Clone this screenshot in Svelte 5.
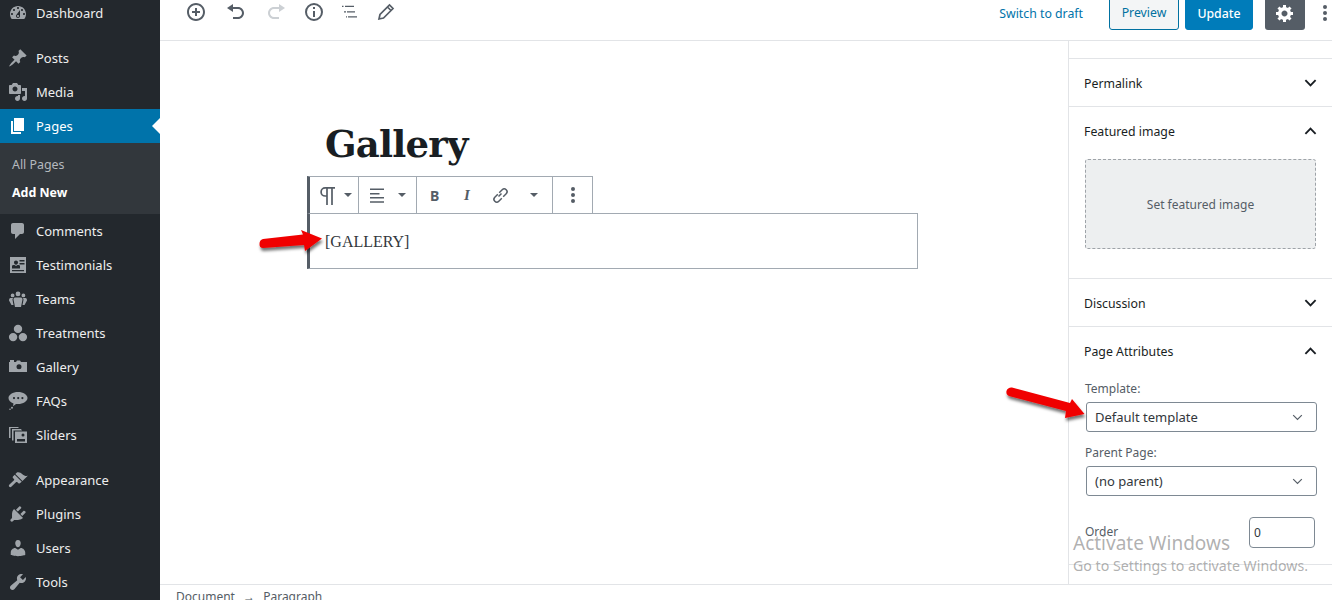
<script>
	const ui = {
		dashboard: "M3.76 16h12.48c1.1-1.37 1.76-3.11 1.76-5 0-4.42-3.58-8-8-8s-8 3.58-8 8c0 1.89.66 3.63 1.76 5zM10 4c.55 0 1 .45 1 1s-.45 1-1 1-1-.45-1-1 .45-1 1-1zM6 6c.55 0 1 .45 1 1s-.45 1-1 1-1-.45-1-1 .45-1 1-1zm8 0c.55 0 1 .45 1 1s-.45 1-1 1-1-.45-1-1 .45-1 1-1zm-5.37 5.55L12 7v6c0 1.1-.9 2-2 2s-2-.9-2-2c0-.57.24-1.08.63-1.45zM4 10c.55 0 1 .45 1 1s-.45 1-1 1-1-.45-1-1 .45-1 1-1zm12 0c.55 0 1 .45 1 1s-.45 1-1 1-1-.45-1-1 .45-1 1-1zm-5 3c0-.55-.45-1-1-1s-1 .45-1 1 .45 1 1 1 1-.45 1-1z",
		posts: "M10.44 3.02l1.82-1.82 6.36 6.35-1.83 1.82c-1.05-.68-2.48-.57-3.41.36l-.75.75c-.92.93-1.04 2.35-.35 3.41l-1.83 1.82-2.41-2.41-2.8 2.79c-.42.42-3.38 2.71-3.8 2.29s1.86-3.39 2.28-3.81l2.79-2.79L4.1 9.36l1.83-1.82c1.05.69 2.48.57 3.4-.36l.75-.75c.93-.92 1.05-2.35.36-3.41z",
		media: "M13 11V4c0-.55-.45-1-1-1h-1.67L9 1H5L3.67 3H2c-.55 0-1 .45-1 1v7c0 .55.45 1 1 1h10c.55 0 1-.45 1-1zM7 4.5c1.38 0 2.5 1.12 2.5 2.5S8.38 9.5 7 9.5 4.5 8.38 4.5 7 5.62 4.5 7 4.5zM14 6h5v10.5c0 1.38-1.12 2.5-2.5 2.5S14 17.88 14 16.5s1.12-2.5 2.5-2.5c.17 0 .34.02.5.05V9h-3V6zm-4 8.05V13h2v3.5c0 1.38-1.12 2.5-2.5 2.5S7 17.88 7 16.5 8.12 14 9.5 14c.17 0 .34.02.5.05z",
		pages: "M6 15V2h10v13H6zm-1 1h8v2H3V5h2v11z",
		comments: "M5 2h9c1.1 0 2 .9 2 2v7c0 1.1-.9 2-2 2h-2l-5 5v-5H5c-1.1 0-2-.9-2-2V4c0-1.1.9-2 2-2z",
		testimonials: "M2 2h16v16H2zM8 5.5c-1.2 0-2 .9-2 2s.8 2.3 2 2.3 2-1.2 2-2.300-.8-2-2-2zM11.500 5v1.500h5V5zM11.500 8v1.500h5V8zM4 11v2.500h8V11c0-.6-1-.8-2.500-.9L8 11l-1.500-.9C5 10.200 4 10.400 4 11zM4 15v1.300h12V15z",
		teams: "M10 2.500a2.400 2.400 0 1 0 0 4.800 2.400 2.400 0 0 0 0-4.800zM4.600 4.500a1.900 1.900 0 1 0 0 3.800 1.900 1.900 0 0 0 0-3.800zM15.400 4.500a1.900 1.900 0 1 0 0 3.800 1.900 1.900 0 0 0 0-3.800zM7 8.500h6c1 0 1.500 1 1.500 2L13 18H7l-1.500-7.500c0-1 .5-2 1.500-2zM2.500 9h2.700c-.5.5-.7 1-.7 1.800l1 5.200H3.500L1 11.500c0-1.200.5-2.500 1.500-2.500zM17.500 9h-2.700c.5.5.7 1 .7 1.800l-1 5.200h2L19 11.500c0-1.200-.5-2.500-1.500-2.500z",
		treatments: "M10 1.700a4.200 4.200 0 1 0 0 8.400 4.200 4.200 0 0 0 0-8.400zM5.100 9.900a4.200 4.200 0 1 0 0 8.400 4.200 4.200 0 0 0 0-8.400zM14.900 9.900a4.200 4.200 0 1 0 0 8.400 4.200 4.200 0 0 0 0-8.400z",
		gallery: "M1 5h1V3h4v2h2l1-1.500h3L13 5h6v10H1zM11 7.200a2.500 2.500 0 1 0 0 5 2.500 2.500 0 0 0 0-5z",
		faqs: "M10 1c5.200 0 9.500 2.700 9.500 6s-4.300 6-9.500 6c-.7 0-1.400 0-2-.1L5 15.300l.5-2.800C2.500 11.500.5 9.500.5 7c0-3.300 4.300-6 9.500-6zM6 6a1.100 1.100 0 1 0 0 2.200A1.100 1.100 0 0 0 6 6zm4.200 0a1.100 1.100 0 1 0 0 2.200 1.100 1.100 0 0 0 0-2.200zm4.200 0a1.100 1.100 0 1 0 0 2.200 1.100 1.100 0 0 0 0-2.200zM4 15.700a1 1 0 1 1 0 2 1 1 0 0 1 0-2zM2 17.500a.8.8 0 1 1 0 1.600.8.8 0 0 1 0-1.600z",
		sliders: "M7 6.500h12V18H7zM15 8.500a1.500 1.500 0 1 0 0 3 1.500 1.500 0 0 0 0-3zM9 14v2.500h8V14zM4 4h9l1 1.500H5.500v10H4zM1 2h9l1 1H2.500v10H1z",
		appearance: "M14.48 11.06L7.41 3.99l1.5-1.5c.5-.56 2.3-.47 3.51.32 1.21.8 1.43 1.28 2.91 2.1 1.18.64 2.45 1.26 4.45.85zM13.770 11.770L6.700 4.700 4.930 6.470c-.39.39-.39 1.020 0 1.410l1.060 1.060c.39.39.39 1.030 0 1.420L1.500 14.500c-.8.8-.8 1.700-.2 2.300s1.500.6 2.300-.2l4.350-4.350c.39-.39 1.030-.39 1.420 0l1.060 1.060c.39.39 1.020.39 1.410 0z",
		plugins: "M13.11 4.36L9.87 7.6 8 5.73l3.24-3.24c.35-.34 1.05-.2 1.56.32.52.51.66 1.21.31 1.55zm-8 1.77l.91-1.12 9.01 9.01-1.19.84c-.71.71-2.63 1.16-3.82 1.16H6.14L4.9 17.26c-.59.59-1.54.59-2.12 0-.59-.58-.59-1.53 0-2.12l1.24-1.24v-3.88c0-1.13.4-3.19 1.09-3.89zm7.26 3.97l3.24-3.24c.34-.35 1.04-.21 1.55.31.52.51.66 1.21.31 1.55l-3.24 3.25z",
		users: "M10 9.25c-2.27 0-2.73-3.44-2.73-3.44C7 4.02 7.82 2 9.97 2c2.16 0 2.98 2.02 2.71 3.81 0 0-.41 3.44-2.68 3.44zm0 2.57L12.72 10c2.39 0 4.52 2.33 4.52 4.53v2.49s-3.65 1.13-7.24 1.13c-3.65 0-7.24-1.13-7.24-1.13v-2.49c0-2.25 1.94-4.48 4.47-4.48z",
		tools: "M16.68 9.77c-1.34 1.34-3.3 1.67-4.95.99l-5.41 6.52c-.99.99-2.59.99-3.58 0s-.99-2.59 0-3.57l6.52-5.42c-.68-1.65-.35-3.61.99-4.95 1.28-1.28 3.12-1.62 4.72-1.06l-2.89 2.89 2.82 2.82 2.86-2.87c.53 1.58.18 3.39-1.08 4.65z"
	};

	const groupA = [["Dashboard", "dashboard"]];
	const groupB = [["Posts", "posts"], ["Media", "media"]];
	const groupC = [
		["Comments", "comments"],
		["Testimonials", "testimonials"],
		["Teams", "teams"],
		["Treatments", "treatments"],
		["Gallery", "gallery"],
		["FAQs", "faqs"],
		["Sliders", "sliders"]
	];
	const groupD = [
		["Appearance", "appearance"],
		["Plugins", "plugins"],
		["Users", "users"],
		["Tools", "tools"]
	];
</script>

{#snippet item(row)}
	<a class="item" href="#top">
		<svg class="mi" viewBox="0 0 20 20"><path d={ui[row[1]]} /></svg>
		<span>{row[0]}</span>
	</a>
{/snippet}

{#snippet chev(up)}
	<svg class="chev" viewBox="0 0 14 8"><path d={up ? "M1.5 7L7 1.5 12.5 7" : "M1.5 1L7 6.5 12.5 1"} /></svg>
{/snippet}

{#snippet caret()}
	<i class="caret"></i>
{/snippet}

<div class="shell">
	<nav class="nav">
		{#each groupA as row}{@render item(row)}{/each}
		<div class="sep"></div>
		{#each groupB as row}{@render item(row)}{/each}
		<a class="item active" href="#top">
			<svg class="mi" viewBox="0 0 20 20"><path d={ui.pages} /></svg>
			<span>Pages</span>
		</a>
		<div class="sub">
			<a href="#top">All Pages</a>
			<a href="#top" class="on">Add New</a>
		</div>
		{#each groupC as row}{@render item(row)}{/each}
		<div class="sep"></div>
		{#each groupD as row}{@render item(row)}{/each}
	</nav>

	<div class="main">
		<header class="top">
			<div class="tools">
				<button class="tw" aria-label="Add block">
					<svg viewBox="0 0 20 20" class="ti"><path d="M10 1c-5 0-9 4-9 9s4 9 9 9 9-4 9-9-4-9-9-9zm0 16c-3.9 0-7-3.1-7-7s3.1-7 7-7 7 3.1 7 7-3.1 7-7 7zm1-11H9v3H6v2h3v3h2v-3h3V9h-3V6z" /></svg>
				</button>
				<button class="tw" aria-label="Undo">
					<svg viewBox="0 0 20 20" class="ti"><path d="M12 5H7V2L1 6l6 4V7h5c2.2 0 4 1.8 4 4s-1.8 4-4 4H7v2h5c3.3 0 6-2.7 6-6s-2.7-6-6-6z" /></svg>
				</button>
				<button class="tw off" aria-label="Redo">
					<svg viewBox="0 0 20 20" class="ti"><path d="M8 5h5V2l6 4-6 4V7H8c-2.2 0-4 1.8-4 4s1.8 4 4 4h5v2H8c-3.3 0-6-2.7-6-6s2.7-6 6-6z" /></svg>
				</button>
				<button class="tn" aria-label="Details">
					<svg viewBox="0 0 20 20" class="ti"><path d="M10 1a9 9 0 1 0 0 18 9 9 0 0 0 0-18zm0 16a7 7 0 1 1 0-14 7 7 0 0 1 0 14zM9 9h2v6H9zm0-4h2v2H9z" /></svg>
				</button>
				<button class="tn" aria-label="Outline">
					<svg viewBox="0 0 20 20" class="ti"><path d="M2 3.800h1.500v1.300H2zM5 3.800h9v1.300H5zM4 9.300h2v1.300H4zM7 9.300h8v1.300H7zM6 14.200h1v1.300H6zM8 14.200h9v1.300H8z" /></svg>
				</button>
				<button class="tn" aria-label="Tools">
					<svg viewBox="0 0 20 20" class="pencil"><path d="M3 17l1-4.500L13.500 3 17 6.500 7.500 16zM11.500 5l3.500 3.500" /></svg>
				</button>
			</div>
			<div class="actions">
				<a class="draft" href="#top">Switch to draft</a>
				<button class="preview">Preview</button>
				<button class="update">Update</button>
				<button class="gear" aria-label="Settings">
					<svg viewBox="0 0 20 20" width="20" height="20"><path fill="#fff" d="M18 12h-2.180c-.17.7-.44 1.350-.81 1.930l1.540 1.540-2.100 2.100-1.540-1.540c-.58.360-1.230.640-1.910.810V19H8v-2.180c-.680-.170-1.330-.450-1.910-.810l-1.540 1.540-2.120-2.120 1.540-1.540c-.360-.580-.640-1.230-.810-1.910H1V9h2.180c.170-.680.450-1.330.810-1.910L2.450 5.550l2.100-2.100 1.540 1.540c.580-.370 1.230-.640 1.910-.810V2h3v2.180c.680.170 1.330.440 1.910.810l1.540-1.540 2.120 2.120-1.540 1.540c.360.580.640 1.230.810 1.890H18v3zm-8.500 1.500c1.660 0 3-1.340 3-3s-1.340-3-3-3-3 1.340-3 3 1.340 3 3 3z" /></svg>
				</button>
				<svg class="kebab" viewBox="0 0 4 18"><circle cx="2" cy="3" r="2" /><circle cx="2" cy="9" r="2" /><circle cx="2" cy="15" r="2" /></svg>
			</div>
		</header>

		<div class="body">
			<section class="editor">
				<h1 class="title">Gallery</h1>
				<div class="blocktools">
					<div class="bt g1">
						<svg viewBox="0 0 20 20" class="bi pil"><path d="M18 2.800H8.200a4.100 4.100 0 0 0 0 8.200H10M10 2.800V20M15 2.800V20" /></svg>
						{@render caret()}
					</div>
					<div class="bt g2">
						<svg viewBox="0 0 20 20" class="bi"><path d="M3 3.600h14v1.500H3zM3 8h9.500v1.500H3zM3 12h14v1.500H3zM3 16.200h14v1.500H3z" /></svg>
						{@render caret()}
					</div>
					<div class="bt g3">
						<b class="lb">B</b>
						<em class="li">I</em>
						<svg viewBox="0 0 20 20" class="link"><path d="M8.500 11.500l3-3M7.800 9.200l-3 3a2.800 2.800 0 0 0 4 4l3-3M9.200 7.800l3-3a2.800 2.800 0 0 1 4 4l-3 3" /></svg>
						{@render caret()}
					</div>
					<div class="bt g4">
						<svg class="kebab small" viewBox="0 0 4 18"><circle cx="2" cy="3" r="2" /><circle cx="2" cy="9" r="2" /><circle cx="2" cy="15" r="2" /></svg>
					</div>
				</div>
				<div class="para">[GALLERY]</div>
			</section>

			<aside class="side">
				<div class="panel stub"></div>
				<div class="panel">
					<div class="phead"><span>Permalink</span>{@render chev(false)}</div>
				</div>
				<div class="panel featured">
					<div class="phead"><span>Featured image</span>{@render chev(true)}</div>
					<div class="drop">Set featured image</div>
				</div>
				<div class="panel">
					<div class="phead"><span>Discussion</span>{@render chev(false)}</div>
				</div>
				<div class="panel attrs">
					<div class="phead"><span>Page Attributes</span>{@render chev(true)}</div>
					<div class="field first">Template:</div>
					<div class="select">Default template {@render chev(false)}</div>
					<div class="field">Parent Page:</div>
					<div class="select">(no parent) {@render chev(false)}</div>
					<div class="order">
						<span>Order</span>
						<div class="num">0</div>
					</div>
				</div>
			</aside>
		</div>

		<footer class="crumbs">Document <span class="arrow">→</span> Paragraph</footer>
	</div>

	<svg class="overlay" viewBox="0 0 1332 600" aria-hidden="true">
		<defs>
			<filter id="sh" x="-20%" y="-50%" width="140%" height="200%">
				<feDropShadow dx="1" dy="3" stdDeviation="1.500" flood-color="#000" flood-opacity="0.55" />
			</filter>
		</defs>
		<path filter="url(#sh)" fill="#f00000" d="M263 239l40-4.500-2-4.500 21 8.500-17 12.500-1-6-41 3c-2.500 0-3.500-1.500-3.500-4s1-4.500 3.500-5z" />
		<path filter="url(#sh)" fill="#f00000" d="M1012 387.500l58 15.500 2-4 12.500 15-19.500 4 1-7-57-15c-2-1-3-2.500-2.500-5s3.500-4 5.500-3.500z" />
	</svg>

	<div class="activate">
		<div class="a1">Activate Windows</div>
		<div class="a2">Go to Settings to activate Windows.</div>
	</div>
</div>

<style>
	:global(body) {
		margin: 0;
		background: #fff;
	}
	.shell {
		position: relative;
		display: flex;
		width: 1332px;
		height: 600px;
		overflow: hidden;
		font-family: "Noto Sans", "Open Sans", sans-serif;
		color: #32373c;
	}
	.nav {
		width: 160px;
		flex: none;
		height: 604px;
		margin-top: -4px;
		background: #23282d;
	}
	.item {
		display: flex;
		align-items: center;
		height: 34px;
		color: #eee;
		font-size: 13px;
		text-decoration: none;
	}
	.item span {
		margin-top: -1px;
	}
	.mi {
		width: 20px;
		height: 20px;
		margin: 0 8px;
		fill: #a0a5aa;
		fill-rule: evenodd;
		flex: none;
	}
	.sep {
		height: 11px;
	}
	.active {
		position: relative;
		background: #0073aa;
		color: #fff;
	}
	.active .mi {
		fill: #fff;
	}
	.active::after {
		content: "";
		position: absolute;
		right: 0;
		top: 50%;
		margin-top: -8px;
		border: 8px solid transparent;
		border-right-color: #fff;
		border-left-width: 0;
	}
	.sub {
		height: 71px;
		box-sizing: border-box;
		padding-top: 8px;
		background: #32373c;
	}
	.sub a {
		display: block;
		height: 28px;
		line-height: 28px;
		padding-left: 12px;
		font-size: 12.4px;
		color: #b4b9be;
		text-decoration: none;
	}
	.sub .on {
		color: #fff;
		font-weight: 700;
	}
	.main {
		flex: 1;
		display: flex;
		flex-direction: column;
		min-width: 0;
	}
	.top {
		height: 41px;
		flex: none;
		box-sizing: border-box;
		border-bottom: 1px solid #e2e4e7;
		display: flex;
		justify-content: space-between;
	}
	.tools {
		display: flex;
		padding-left: 16px;
		height: 24px;
	}
	.tools button {
		height: 24px;
		padding: 0;
		border: 0;
		background: none;
		display: flex;
		justify-content: center;
		align-items: center;
	}
	.tw {
		width: 40px;
	}
	.tn {
		width: 36px;
	}
	.ti {
		width: 20px;
		height: 20px;
		fill: #555d66;
	}
	.pencil {
		width: 20px;
		height: 20px;
		fill: none;
		stroke: #555d66;
		stroke-width: 1.7;
	}
	.off .ti {
		fill: #ccd0d4;
	}
	.actions {
		display: flex;
		align-items: flex-start;
		height: 40px;
	}
	.draft {
		margin: 5px 26px 0 0;
		font-size: 12.3px;
		line-height: 18px;
		color: #0073aa;
		text-decoration: none;
	}
	.actions button {
		font-family: inherit;
		font-size: 12.3px;
		box-sizing: border-box;
		margin-top: -10px;
		height: 40px;
		border-radius: 3px;
		padding: 0;
	}
	.preview {
		width: 70px;
		margin-right: 6px;
		background: #f3f5f6;
		border: 1px solid #0071a1;
		color: #0071a1;
		padding-top: 4px !important;
	}
	.update {
		width: 68px;
		margin-right: 12px;
		background: #007cba;
		border: 1px solid #007cba;
		color: #fff;
		font-weight: 500;
		padding-top: 6px !important;
	}
	.gear {
		width: 40px;
		background: #555d66;
		border: 0;
		display: flex;
		align-items: flex-end;
		justify-content: center;
		padding-bottom: 7px !important;
	}
	.kebab {
		width: 4px;
		height: 18px;
		fill: #555d66;
		margin: 4px 5px 0 18px;
	}
	.body {
		flex: 1;
		display: flex;
		min-height: 0;
	}
	.editor {
		flex: 1;
		min-width: 0;
		padding-left: 147px;
	}
	.title {
		margin: 77px 0 0 18px;
		height: 58px;
		font: 700 37px/52px "DejaVu Serif", serif;
		letter-spacing: -0.8px;
		color: #191e23;
	}
	.blocktools {
		display: flex;
		width: 286px;
		height: 37px;
		box-sizing: border-box;
		border: 1px solid #a2aab2;
		border-left: 3px solid #555d66;
		border-bottom: 0;
	}
	.bt {
		position: relative;
		display: flex;
		align-items: center;
		height: 100%;
		box-sizing: border-box;
		border-right: 1px solid #a2aab2;
		color: #555d66;
	}
	.bt:last-child {
		border-right: 0;
	}
	.g1 {
		width: 49px;
		padding-left: 7px;
	}
	.g2 {
		width: 58px;
		padding-left: 8px;
	}
	.g3 {
		width: 136px;
	}
	.g4 {
		flex: 1;
		justify-content: center;
	}
	.bi {
		width: 20px;
		height: 20px;
		fill: #555d66;
		flex: none;
	}
	.pil {
		fill: none;
		stroke: #555d66;
		stroke-width: 1.7;
	}
	.caret {
		position: absolute;
		right: 6px;
		top: 16px;
		border: 4px solid transparent;
		border-top: 4px solid #555d66;
		border-bottom: 0;
	}
	.g2 .caret {
		right: 10px;
	}
	.g3 .caret {
		right: 14px;
	}
	.lb {
		position: absolute;
		left: 13px;
		font-size: 14px;
	}
	.li {
		position: absolute;
		left: 47px;
		font: italic 700 15px "Liberation Serif", serif;
	}
	.link {
		position: absolute;
		left: 73px;
		width: 20px;
		height: 20px;
		fill: none;
		stroke: #555d66;
		stroke-width: 1.5;
	}
	.kebab.small {
		margin: 0;
		height: 18px;
	}
	.para {
		width: 611px;
		height: 56px;
		box-sizing: border-box;
		border: 1px solid #a2aab2;
		border-left: 3px solid #555d66;
		padding-left: 15px;
		font: 16px/56px "Liberation Serif", serif;
		color: #32373c;
	}
	.side {
		width: 264px;
		flex: none;
		box-sizing: border-box;
		border-left: 1px solid #e2e4e7;
	}
	.panel {
		border-bottom: 1px solid #e2e4e7;
	}
	.stub {
		height: 17px;
	}
	.phead {
		display: flex;
		align-items: center;
		justify-content: space-between;
		height: 47px;
		padding: 0 15px;
		font-size: 12.3px;
		color: #191e23;
	}
	.phead span {
		margin-top: 1px;
	}
	.chev {
		width: 13px;
		height: 8px;
		fill: none;
		stroke: #191e23;
		stroke-width: 2;
	}
	.featured {
		height: 172px;
		box-sizing: border-box;
	}
	.drop {
		margin: 5px 0 0 16px;
		width: 231px;
		height: 90px;
		box-sizing: border-box;
		border: 1px dashed #9ea3a8;
		border-radius: 3px;
		background: #edeff0;
		display: flex;
		align-items: center;
		justify-content: center;
		font-size: 12px;
		color: #555d66;
	}
	.attrs {
		height: 238px;
		box-sizing: border-box;
	}
	.field {
		margin: 12px 0 4px 16px;
		height: 18px;
		line-height: 18px;
		font-size: 12px;
		color: #555d66;
	}
	.field.first {
		margin-top: 6px;
	}
	.select {
		display: flex;
		align-items: center;
		justify-content: space-between;
		box-sizing: border-box;
		width: 231px;
		height: 30px;
		margin: 0 0 0 17px;
		padding: 0 13px 0 8px;
		border: 1px solid #7e8993;
		border-radius: 3px;
		font-size: 13px;
		color: #32373c;
	}
	.select .chev {
		width: 11px;
		height: 7px;
		stroke: #555d66;
		stroke-width: 1.5;
	}
	.order {
		display: flex;
		justify-content: space-between;
		align-items: center;
		margin: 21px 0 0 16px;
		width: 230px;
		font-size: 12px;
		color: #555d66;
	}
	.order span {
		margin-top: -2px;
	}
	.num {
		box-sizing: border-box;
		width: 66px;
		height: 31px;
		line-height: 29px;
		padding-left: 4px;
		border: 1px solid #7e8993;
		border-radius: 4px;
		color: #32373c;
	}
	.crumbs {
		height: 16px;
		flex: none;
		box-sizing: border-box;
		border-top: 1px solid #e2e4e7;
		padding: 4px 0 0 16px;
		font-size: 12px;
		line-height: 16px;
		overflow: hidden;
		color: #555d66;
		background: #fff;
	}
	.arrow {
		margin: 0 5px;
	}
	.overlay {
		position: absolute;
		inset: 0;
		width: 1332px;
		height: 600px;
		pointer-events: none;
	}
	.activate {
		position: absolute;
		left: 1073px;
		top: 530px;
		color: rgba(110, 110, 110, 0.55);
		white-space: nowrap;
		pointer-events: none;
	}
	.a1 {
		font-size: 19px;
		line-height: 27px;
	}
	.a2 {
		font-size: 14.2px;
		line-height: 20px;
		margin-top: -1px;
	}
</style>
